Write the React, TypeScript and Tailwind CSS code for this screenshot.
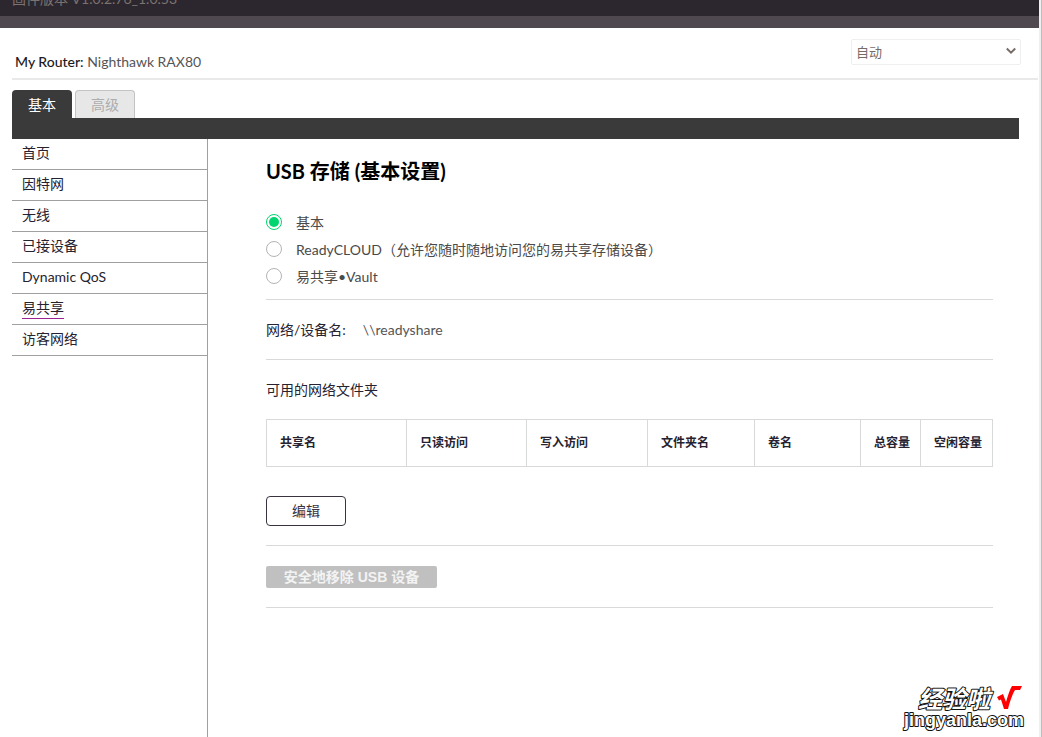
import React, { useState } from 'react';

const menu = ['首页', '因特网', '无线', '已接设备', 'Dynamic QoS', '易共享', '访客网络'];

const modes = ['基本', 'ReadyCLOUD（允许您随时随地访问您的易共享存储设备）', '易共享•Vault'];

const columns = [
  { name: '共享名', width: 'w-[140px]' },
  { name: '只读访问', width: 'w-[120px]' },
  { name: '写入访问', width: 'w-[121px]' },
  { name: '文件夹名', width: 'w-[107px]' },
  { name: '卷名', width: 'w-[106px]' },
  { name: '总容量', width: 'w-[60px]' },
  { name: '空闲容量', width: 'w-[72px]' },
];

function Header() {
  return (
    <header>
      <div className="flex h-4 items-end overflow-hidden bg-[#2c272e] pb-[7px] pl-3 text-[#7c726e]">
        固件版本 V1.0.2.76_1.0.53
      </div>
      <div className="h-3 bg-[#4f494f]" />
      <div className="ml-3 mr-px flex h-[52px] items-start justify-between border-b-2 border-[#e9e9e9] pt-[11px] pr-[17px]">
        <p className="self-end pb-[6px] pl-[3px] text-[#555555]">
          <span className="font-medium text-[#1c1a24]">My Router:</span> Nighthawk RAX80
        </p>
        <div className="relative w-[170px]">
          <select
            aria-label="语言"
            className="h-[26px] w-full appearance-none rounded-xs border border-[#efefef] bg-white px-1 text-[13px] text-[#776b68]"
          >
            <option>自动</option>
          </select>
          <svg
            className="pointer-events-none absolute top-[8px] right-[5px]"
            width="10"
            height="8"
            viewBox="0 0 10 8"
            fill="none"
            stroke="#776b68"
            strokeWidth="2"
          >
            <path d="M0.8 1.5 L5 5.6 L9.2 1.5" />
          </svg>
        </div>
      </div>
    </header>
  );
}

function Tabs() {
  return (
    <div className="mr-5 ml-3 pt-[10px]">
      <div className="flex gap-[3px]">
        <button className="h-7 w-[60px] rounded-t bg-[#3a3a3a] pt-px text-white">基本</button>
        <button className="h-7 w-[60px] rounded-t border border-b-0 border-[#c3c3c3] bg-[#e7e7e7] text-[#acacac]">
          高级
        </button>
      </div>
      <div className="h-[21px] bg-[#3a3a3a]" />
    </div>
  );
}

function Sidebar() {
  return (
    <nav className="ml-3 w-[196px] shrink-0 border-r border-[#a0a0a0] text-[#262230]">
      <ul>
        {menu.map((item) => (
          <li key={item} className="flex h-[31px] items-start border-b border-[#a0a0a0] pt-1 pl-[10px]">
            <a
              href="#"
              className={`block border-b ${item === '易共享' ? 'border-[#9b2590]' : 'border-transparent'}`}
            >
              {item}
            </a>
          </li>
        ))}
      </ul>
    </nav>
  );
}

function Content() {
  const [mode, setMode] = useState(0);
  return (
    <main className="min-w-0 flex-1 pt-[17px] pr-[46px] pl-[58px] text-[#262230]">
      <h1 className="text-[20px] leading-[30px] font-bold text-black">USB 存储 (基本设置)</h1>
      <div className="flex flex-col gap-[7px] border-b border-[#d8dada] pt-[27px] pb-[12px]">
        {modes.map((label, i) => (
          <label key={label} className="flex h-5 items-center gap-[14px] text-[#4a4a4a]">
            <input
              type="radio"
              name="mode"
              checked={mode === i}
              onChange={() => setMode(i)}
              className="mb-[2px] size-4 appearance-none rounded-full border border-[#b4b4b4] bg-white p-[2px] checked:border-[#00d56f] checked:bg-[#00d56f] checked:bg-clip-content"
            />
            {label}
          </label>
        ))}
      </div>
      <div className="flex h-[60px] items-center gap-[17px] border-b border-[#d8dada]">
        <span>网络/设备名:</span>
        <span className="text-[#555555]">\\readyshare</span>
      </div>
      <h2 className="flex h-[59px] items-center">可用的网络文件夹</h2>
      <table className="w-full table-fixed border-collapse">
        <thead>
          <tr>
            {columns.map((c) => (
              <th
                key={c.name}
                className={`${c.width} h-[47px] border border-[#d8dada] pl-[13px] text-left text-[12px] font-bold whitespace-nowrap`}
              >
                {c.name}
              </th>
            ))}
          </tr>
        </thead>
      </table>
      <div className="border-b border-[#d8dada] pt-[29px] pb-[19px]">
        <button className="block h-[30px] w-20 rounded border border-[#39323f] bg-white text-[#39323f]">编辑</button>
      </div>
      <div className="border-b border-[#d8dada] pt-5 pb-[19px]">
        <button
          disabled
          className="block h-[22px] w-[171px] rounded-xs bg-[#c0c0c0] font-['Liberation_Sans','Noto_Sans_CJK_SC',sans-serif] font-bold text-[#f3f3f3]"
        >
          安全地移除 USB 设备
        </button>
      </div>
    </main>
  );
}

function Watermark() {
  return (
    <svg
      className="absolute right-[10px] bottom-0"
      width="136"
      height="60"
      viewBox="0 0 136 60"
      fill="#fff"
      stroke="#111"
      strokeWidth="2"
      strokeLinejoin="round"
    >
      <g fontWeight="700" style={{ paintOrder: 'stroke' }}>
        <text x="22" y="31" fontSize="24" fontStyle="italic" fontFamily="'Noto Sans CJK SC', sans-serif">
          经验啦
        </text>
        <text x="8" y="49" fontSize="18" fontFamily="'Liberation Sans', sans-serif">
          jingyanla.com
        </text>
      </g>
      <path
        d="M101 20 L107 17 L110 25 C112 18 114 12 116 9 H126 L124 13 H119 C116 18 113.5 26 112 32 H108 L105 22.5 L103 23.5 Z"
        fill="#f00"
        stroke="none"
      />
    </svg>
  );
}

export default function App() {
  return (
    <div className="relative flex min-h-screen bg-white font-['Lato','Noto_Sans_CJK_SC',sans-serif] text-[14px] leading-5">
      <div className="flex min-w-0 flex-1 flex-col">
        <Header />
        <Tabs />
        <div className="flex flex-1">
          <Sidebar />
          <Content />
        </div>
      </div>
      <div className="w-[3px] shrink-0 border-r border-[#bdbdbd] bg-[#efefef]" />
      <Watermark />
    </div>
  );
}
